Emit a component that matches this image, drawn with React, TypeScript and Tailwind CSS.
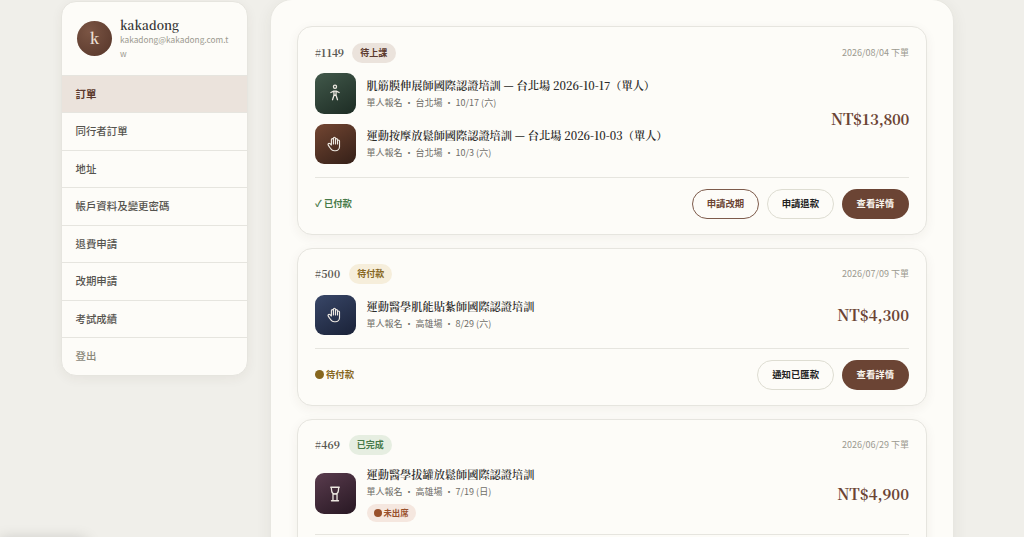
import type { FC, ReactNode } from 'react';

type IconName = 'person' | 'hand' | 'cup';

interface OrderItem {
  title: string;
  meta: string;
  icon: IconName;
  tile: string;
  absent?: boolean;
}

interface Order {
  id: string;
  idClass: string;
  status: string;
  statusClass: string;
  date: string;
  price: string;
  priceClass: string;
  items: OrderItem[];
  payment?: ReactNode;
  paymentClass?: string;
  actions?: { label: string; variant: keyof typeof buttonStyles }[];
}

const serif = "font-['Noto_Serif_CJK_TC','Liberation_Serif',serif]";

const buttonStyles = {
  outline: 'border-[1.5px] border-[#7d5b4b] px-[14px] text-[#6b4434]',
  plain: 'border border-[#deddd2] px-[14px] text-[#222]',
  solid: 'bg-[#6b4434] px-[15px] text-[#faf5ee]',
};

const menu = ['訂單', '同行者訂單', '地址', '帳戶資料及變更密碼', '退費申請', '改期申請', '考試成績', '登出'];

const Dot: FC = () => <span className="size-[9px] rounded-full bg-current" />;

const orders: Order[] = [
  {
    id: '1149',
    idClass: 'tracking-[-0.45px]',
    status: '待上課',
    statusClass: 'bg-[#ebe3dc] text-[#5c3a2d]',
    date: '2026/08/04 下單',
    price: 'NT$13,800',
    priceClass: 'tracking-[-0.3px]',
    items: [
      { title: '肌筋膜伸展師國際認證培訓 — 台北場 2026-10-17（單人）', meta: '單人報名 ・ 台北場 ・ 10/17 (六)', icon: 'person', tile: 'from-[#42594b] to-[#1d2c24]' },
      { title: '運動按摩放鬆師國際認證培訓 — 台北場 2026-10-03（單人）', meta: '單人報名 ・ 台北場 ・ 10/3 (六)', icon: 'hand', tile: 'from-[#734632] to-[#352018]' },
    ],
    payment: '✓ 已付款',
    paymentClass: 'text-[#477a49]',
    actions: [
      { label: '申請改期', variant: 'outline' },
      { label: '申請退款', variant: 'plain' },
      { label: '查看詳情', variant: 'solid' },
    ],
  },
  {
    id: '500',
    idClass: 'tracking-[0.2px]',
    status: '待付款',
    statusClass: 'bg-[#f6eedb] text-[#87671f]',
    date: '2026/07/09 下單',
    price: 'NT$4,300',
    priceClass: 'tracking-normal',
    items: [
      { title: '運動醫學肌能貼紮師國際認證培訓', meta: '單人報名 ・ 高雄場 ・ 8/29 (六)', icon: 'hand', tile: 'from-[#394768] to-[#1a2238]' },
    ],
    payment: <><Dot />待付款</>,
    paymentClass: 'text-[#87671f]',
    actions: [
      { label: '通知已匯款', variant: 'plain' },
      { label: '查看詳情', variant: 'solid' },
    ],
  },
  {
    id: '469',
    idClass: 'tracking-[0.1px]',
    status: '已完成',
    statusClass: 'bg-[#e6eee1] text-[#477a49]',
    date: '2026/06/29 下單',
    price: 'NT$4,900',
    priceClass: 'tracking-normal',
    items: [
      { title: '運動醫學拔罐放鬆師國際認證培訓', meta: '單人報名 ・ 高雄場 ・ 7/19 (日)', icon: 'cup', tile: 'from-[#5a3c4e] to-[#281823]', absent: true },
    ],
  },
];

const ItemIcon: FC<{ name: IconName }> = ({ name }) => (
  <svg
    className="size-[18px]"
    viewBox="0 0 24 24"
    fill="none"
    stroke="currentColor"
    strokeWidth={1.7}
    strokeLinecap="round"
    strokeLinejoin="round"
  >
    {name === 'person' && (
      <>
        <circle cx="12" cy="3.6" r="2.1" />
        <path d="M6.500 11.300l3.800-1.800h3.400l3.800 1.800M10.600 9.500v5.500l-1.900 6M13.400 9.500v5.500l1.900 6M10.600 15h2.800" />
      </>
    )}
    {name === 'hand' && (
      <g transform="translate(0 1.2) scale(0.9)">
        <path d="M8 13V5.500a1.500 1.500 0 0 1 3 0V12M11 5.500v-2a1.500 1.500 0 1 1 3 0V12M14 5.500a1.500 1.500 0 0 1 3 0V12M17 7.500a1.500 1.500 0 0 1 3 0V16a6 6 0 0 1-6 6h-1.800a6 6 0 0 1-5-2.700l-.2-.3c-.3-.5-1.900-2.400-3.800-5.700a1.500 1.500 0 0 1 .5-2 1.900 1.900 0 0 1 2.300.2L8 13.500" />
      </g>
    )}
    {name === 'cup' && (
      <path d="M6.300 3h11.400M7 3l.6 5.200c.3 2.400 2 3.800 4.400 3.800s4.100-1.400 4.400-3.800L17 3M9.300 12v9M14.700 12v9M7.300 21h9.400" />
    )}
  </svg>
);

const Sidebar: FC = () => (
  <aside className="mt-px flex h-[375px] w-[186.500px] shrink-0 flex-col overflow-hidden rounded-[15px] border border-[#e6e5df] bg-[#fdfcf8] shadow-[0_3px_12px_rgba(60,50,40,0.06)]">
    <div className="flex h-[72.500px] shrink-0 items-center gap-2 px-[15px]">
      <div className={`flex size-[35px] shrink-0 items-center justify-center rounded-full bg-radial-[at_35%_30%] from-[#7b5544] to-[#553529] text-[15px] font-semibold text-[#ebdfd2] ${serif}`}>
        k
      </div>
      <div className="min-w-0 flex-1">
        <div className={`text-[12px] leading-[17px] font-semibold text-[#333] ${serif}`}>kakadong</div>
        <div className="text-[8.300px] leading-[13.500px] break-all text-[#9b998f]">kakadong@kakadong.com.tw</div>
      </div>
    </div>
    {menu.map((label, i) => (
      <a
        key={label}
        className={`flex h-[37.500px] shrink-0 items-center border-t border-[#e6e5df] px-[13.500px] text-[10.450px] ${
          i === 0 ? 'bg-[#ebe3dc] font-bold text-[#5c3a2d]' : i === menu.length - 1 ? 'font-medium text-[#8a887a]' : 'font-medium text-[#55534e]'
        }`}
      >
        {label}
      </a>
    ))}
  </aside>
);

const OrderCard: FC<{ order: Order }> = ({ order }) => (
  <article className="rounded-[15px] border border-[#e6e5df] bg-[#fdfcf8] px-[17px] pt-[15.500px] pb-[15px] shadow-[0_3px_12px_rgba(60,50,40,0.06)]">
    <header className="flex h-5 items-center gap-[8.500px]">
      <span className={`text-[10.500px] font-bold text-[#5a5853] ${serif} ${order.idClass}`}>
        <span className="font-normal">#</span>{order.id}
      </span>
      <span className={`flex h-5 items-center rounded-full px-[8.250px] text-[9px] font-bold ${order.statusClass}`}>{order.status}</span>
      <span className="ml-auto text-[9px] text-[#9b998f]">{order.date}</span>
    </header>

    <div className="mt-[10.500px] flex items-center justify-between">
      <div className="flex flex-col gap-[10px]">
        {order.items.map((item) => (
          <div key={item.title} className="flex items-center gap-[11px]">
            <div className={`flex size-[40.500px] shrink-0 items-center justify-center rounded-[9px] bg-linear-150 text-[#eee9e2] ${item.tile}`}>
              <ItemIcon name={item.icon} />
            </div>
            <div className={item.absent ? '' : 'pt-px'}>
              <h3 className={`text-[11.200px] leading-[17px] font-semibold text-[#2c2b29] ${serif}`}>{item.title}</h3>
              <p className="text-[9px] leading-[17.500px] text-[#6f6d67]">{item.meta}</p>
              {item.absent && (
                <span className="mt-[3.500px] flex h-[18px] w-fit items-center gap-[2px] rounded-full bg-[#f5e7df] px-[7px] text-[8.400px] font-bold text-[#99502b]">
                  <span className="size-2 rounded-full bg-current" />
                  未出席
                </span>
              )}
            </div>
          </div>
        ))}
      </div>
      <div className={`text-[15px] leading-5 font-bold text-[#6b4434] ${serif} ${order.priceClass}`}>{order.price}</div>
    </div>

    <footer className="mt-[12.500px] flex min-h-[42px] items-center justify-between border-t border-[#e6e5df] pt-[11px]">
      <span className={`flex items-center gap-[2px] text-[9.375px] font-bold ${order.paymentClass ?? ''}`}>{order.payment}</span>
      <div className="flex gap-[7.500px]">
        {order.actions?.map((action) => (
          <button key={action.label} className={`h-[30px] rounded-full text-[9.375px] font-bold ${buttonStyles[action.variant]}`}>
            {action.label}
          </button>
        ))}
      </div>
    </footer>
  </article>
);

export default function App() {
  return (
    <div className="relative flex h-screen items-start gap-[22.500px] overflow-hidden bg-[#f0efea] pl-[61px] font-['Noto_Sans_CJK_TC',sans-serif]">
      <Sidebar />
      <main className="-mt-px flex w-[684px] shrink-0 flex-col gap-[13px] rounded-[22px] border border-[#e8e7e1] bg-[#fdfcf8] px-[26px] pt-[26px] pb-6 shadow-[0_4px_16px_rgba(60,50,40,0.07)]">
        {orders.map((order) => (
          <OrderCard key={order.id} order={order} />
        ))}
      </main>
      <div className="absolute top-full left-0 mt-[3px] h-6 w-[86px] shadow-[0_0_16px_rgba(0,0,0,0.2)]" />
    </div>
  );
}
